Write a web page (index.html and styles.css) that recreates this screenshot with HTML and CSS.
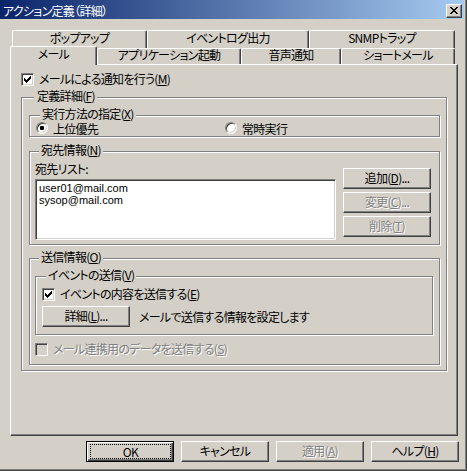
FILE: index.html
```html
<!DOCTYPE html>
<html lang="ja">
<head>
<meta charset="utf-8">
<title>アクション定義（詳細）</title>
<link rel="stylesheet" href="styles.css">
</head>
<body>
<div class="window">
  <div class="titlebar">
    <span class="title">アクション定義（詳細）</span>
    <div class="close" aria-label="閉じる">
      <svg width="8" height="7" viewBox="0 0 8 7" shape-rendering="crispEdges"><path d="M0 0h2v1H0zM6 0h2v1H6zM1 1h2v1H1zM5 1h2v1H5zM2 2h4v1H2zM3 3h2v1H3zM2 4h4v1H2zM1 5h2v1H1zM5 5h2v1H5zM0 6h2v1H0zM6 6h2v1H6z" fill="#000"/></svg>
    </div>
  </div>

  <div class="tabs">
    <div class="tabrow back">
      <div class="tab t-popup">ポップアップ</div>
      <div class="tab t-event">イベントログ出力</div>
      <div class="tab t-snmp">SNMPトラップ</div>
    </div>
    <div class="tabrow front">
      <div class="tab t-mail selected">メール</div>
      <div class="tab t-app">アプリケーション起動</div>
      <div class="tab t-voice">音声通知</div>
      <div class="tab t-short">ショートメール</div>
    </div>
  </div>

  <div class="panel">
    <div class="check-row">
      <span class="checkbox"><svg width="7" height="7" viewBox="0 0 7 7" shape-rendering="crispEdges"><path d="M0 2h1v3H0zM1 3h1v3H1zM2 4h1v3H2zM3 3h1v3H3zM4 2h1v3H4zM5 1h1v3H5zM6 0h1v3H6z" fill="#000"/></svg></span>
      <span class="check-text">メールによる通知を行う(<u>M</u>)</span>
    </div>

    <div class="group g-def">
      <div class="group-title">定義詳細(<u>F</u>)</div>

      <div class="group g-exec">
        <div class="group-title">実行方法の指定(<u>X</u>)</div>
        <div class="radio-row">
          <span class="radio-item first"><span class="radio on"></span><span class="radio-text">上位優先</span></span>
          <span class="radio-item"><span class="radio"></span><span class="radio-text">常時実行</span></span>
        </div>
      </div>

      <div class="group g-dest">
        <div class="group-title">宛先情報(<u>N</u>)</div>
        <div class="dest-body">
          <div class="dest-left">
            <div class="field-label">宛先リスト:</div>
            <div class="listbox">
              <div class="list-item">user01@mail.com</div>
              <div class="list-item">sysop@mail.com</div>
            </div>
          </div>
          <div class="dest-buttons">
            <div class="btn">追加(<u>D</u>)...</div>
            <div class="btn disabled">変更(<u>C</u>)...</div>
            <div class="btn disabled">削除(<u>T</u>)</div>
          </div>
        </div>
      </div>

      <div class="group g-send">
        <div class="group-title">送信情報(<u>O</u>)</div>
        <div class="group g-event">
          <div class="group-title">イベントの送信(<u>V</u>)</div>
          <div class="check-row event-check">
            <span class="checkbox"><svg width="7" height="7" viewBox="0 0 7 7" shape-rendering="crispEdges"><path d="M0 2h1v3H0zM1 3h1v3H1zM2 4h1v3H2zM3 3h1v3H3zM4 2h1v3H4zM5 1h1v3H5zM6 0h1v3H6z" fill="#000"/></svg></span>
            <span class="check-text">イベントの内容を送信する(<u>E</u>)</span>
          </div>
          <div class="detail-row">
            <div class="btn">詳細(<u>L</u>)...</div>
            <span>メールで送信する情報を設定します</span>
          </div>
        </div>
        <div class="check-row disabled link-check">
          <span class="checkbox"></span>
          <span class="check-text">メール連携用のデータを送信する(<u>S</u>)</span>
        </div>
      </div>
    </div>
  </div>

  <div class="footer">
    <div class="btn default"><span class="focus">OK</span></div>
    <div class="btn">キャンセル</div>
    <div class="btn disabled">適用(<u>A</u>)</div>
    <div class="btn">ヘルプ(<u>H</u>)</div>
  </div>
</div>
</body>
</html>
```
FILE: styles.css
```css
* { box-sizing: border-box; }

html, body {
  margin: 0;
  padding: 0;
  background: #d4d0c8;
}

body {
  font-family: "Noto Sans CJK JP", "Noto Sans", sans-serif;
  font-size: 12px;
  line-height: 13px;
  letter-spacing: -0.7px;
  font-feature-settings: "palt";
  color: #000;
}

u {
  text-decoration: underline;
  text-underline-offset: 1px;
}

.window {
  width: 467px;
  height: 471px;
  padding-right: 2px;
  background: #d4d0c8;
  border-right: 1px solid #404040;
  border-bottom: 1px solid #404040;
  box-shadow: inset -1px -1px #808080;
  overflow: hidden;
}

/* title bar */
.titlebar {
  height: 19px;
  display: flex;
  align-items: flex-start;
  padding-left: 3px;
  background: linear-gradient(to right, #0a246a, #a6caf0);
}

.title {
  color: #fff;
  line-height: 21px;
  height: 19px;
  white-space: nowrap;
}

.close {
  margin: 4px 2px 0 auto;
  width: 16px;
  height: 14px;
  flex: none;
  display: flex;
  align-items: center;
  justify-content: center;
  padding-bottom: 1px;
  background: #d4d0c8;
  border: 1px solid;
  border-color: #fff #404040 #404040 #fff;
  box-shadow: inset -1px -1px #808080;
}

.close svg { display: block; }

/* tabs */
.tabs { padding-top: 11px; }

.tabrow { display: flex; align-items: flex-start; }

.tabrow.back { padding-left: 12px; height: 18px; }

.tabrow.front { padding-left: 10px; height: 16px; }

.tab {
  flex: none;
  display: flex;
  align-items: center;
  justify-content: center;
  white-space: nowrap;
  background: #d4d0c8;
  border-top: 1px solid #fff;
  border-left: 1px solid #fff;
  border-right: 1px solid #404040;
  box-shadow: inset -1px 0 #808080;
  border-radius: 2px 2px 0 0;
}

.back .tab { height: 18px; padding-bottom: 4px; }

.front .tab { height: 16px; padding-bottom: 4px; }

.tab.selected {
  position: relative;
  z-index: 1;
  height: 19px;
  margin-top: -2px;
  padding-bottom: 5px;
}

.t-popup { width: 135px; }
.t-event { width: 162px; }
.t-snmp { width: 146px; }
.t-mail { width: 87px; }
.t-app { width: 144px; }
.t-voice { width: 100px; }
.t-short { width: 114px; }

/* panel */
.panel {
  margin-left: 10px;
  width: 448px;
  height: 372px;
  padding: 8px 10px 0 10px;
  border-left: 1px solid #fff;
  border-top: 1px solid #fff;
  border-right: 1px solid #404040;
  border-bottom: 1px solid #404040;
  box-shadow: inset -1px -1px #808080;
}

/* checkboxes */
.check-row {
  display: flex;
  align-items: center;
  gap: 5px;
  height: 13px;
  white-space: nowrap;
}

.check-text { padding-bottom: 2px; }

.checkbox {
  flex: none;
  width: 13px;
  height: 13px;
  display: flex;
  align-items: center;
  justify-content: center;
  background: #fff;
  border: 1px solid;
  border-color: #808080 #fff #fff #808080;
  box-shadow: inset 1px 1px #404040, inset -1px -1px #d4d0c8;
}

.checkbox svg { display: block; }

.check-row.disabled {
  color: #808080;
  text-shadow: 1px 1px #fff;
}

.check-row.disabled .checkbox { background: #d4d0c8; }

/* group boxes */
.group {
  border: 1px solid #808080;
  box-shadow: inset 1px 1px #fff, 1px 1px #fff;
}

.group-title {
  width: fit-content;
  height: 13px;
  margin: -7px 0 0 4px;
  padding: 0 2px 4px;
  line-height: 9px;
  background: #d4d0c8;
  white-space: nowrap;
}

.g-def {
  margin-top: 11px;
  padding: 0 6px 5px 7px;
}

.g-def > .group-title {
  margin-left: 5px;
  padding-left: 3px;
}

.g-exec {
  margin-top: 11px;
  padding: 0 0 1px 6px;
}

.radio-row {
  display: flex;
  align-items: flex-start;
  height: 13px;
}

.radio-item {
  display: flex;
  align-items: flex-start;
  gap: 5px;
  white-space: nowrap;
}

.radio-item.first { width: 189px; }

.radio {
  flex: none;
  width: 12px;
  height: 12px;
  border-radius: 50%;
  display: flex;
  align-items: center;
  justify-content: center;
  background: #fff;
  border: 1px solid;
  border-color: #808080 #fff #fff #808080;
  box-shadow: inset 1px 1px #404040, inset -1px -1px #d4d0c8;
}

.radio.on::after {
  content: "";
  width: 4px;
  height: 4px;
  border-radius: 1px;
  background: #000;
}

.g-dest {
  margin-top: 14px;
  padding: 0 8px 4px 5px;
}

.dest-body {
  display: flex;
  gap: 7px;
  padding-top: 6px;
}

.dest-left { width: 301px; flex: none; }

.field-label {
  height: 13px;
  line-height: 9px;
  padding-bottom: 4px;
}

.listbox {
  margin-top: 2px;
  height: 61px;
  padding: 2px;
  background: #fff;
  border: 1px solid;
  border-color: #808080 #fff #fff #808080;
  box-shadow: inset 1px 1px #404040, inset -1px -1px #d4d0c8;
}

.list-item {
  font-family: "Liberation Sans", Arial, sans-serif;
  font-size: 11px;
  letter-spacing: 0;
  line-height: 12px;
  height: 12px;
  padding-left: 1px;
}

.dest-buttons {
  display: flex;
  flex-direction: column;
  gap: 3px;
  margin-top: 4px;
}

.g-send {
  margin-top: 13px;
  padding: 0 6px 8px 5px;
}

.g-event {
  margin-top: 11px;
  padding: 0 0 7px 6px;
}

.event-check { margin-top: 5px; }

.detail-row {
  display: flex;
  align-items: center;
  gap: 9px;
  margin-top: 5px;
  white-space: nowrap;
}

.link-check { margin-top: 8px; }

/* buttons */
.btn {
  flex: none;
  width: 88px;
  height: 21px;
  display: flex;
  align-items: center;
  justify-content: center;
  padding-bottom: 2px;
  white-space: nowrap;
  background: #d4d0c8;
  border: 1px solid;
  border-color: #fff #404040 #404040 #fff;
  box-shadow: inset -1px -1px #808080;
}

.btn.disabled {
  color: #808080;
  text-shadow: 1px 1px #fff;
}

.btn.default {
  align-items: stretch;
  padding-bottom: 0;
  border-color: #000;
  box-shadow: inset 1px 1px #fff, inset -1px -1px #404040, inset -2px -2px #808080;
}

.focus {
  flex: 1;
  display: flex;
  align-items: center;
  justify-content: center;
  margin: 2px 2px 2px 3px;
  padding-bottom: 1px;
  border: 1px dotted #000;
}

.footer {
  display: flex;
  gap: 7px;
  padding-left: 86px;
  margin-top: 5px;
}
```
